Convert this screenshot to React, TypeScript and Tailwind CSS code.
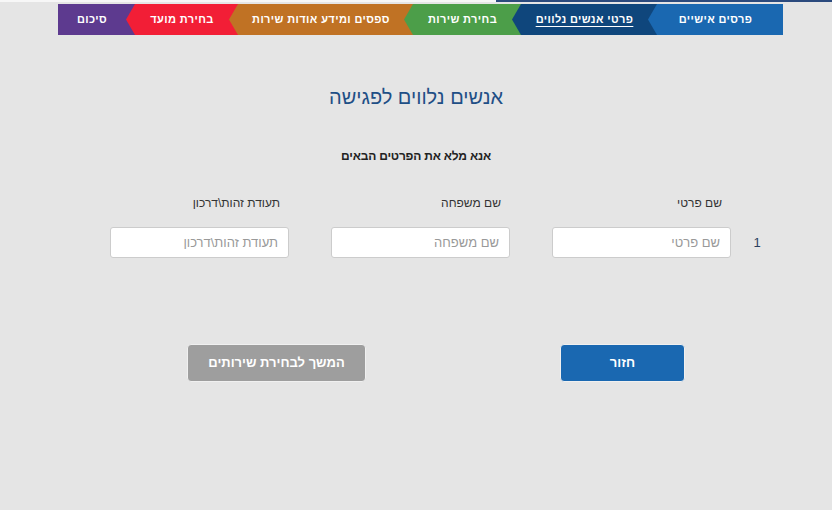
const steps = [
  { label: 'פרסים אישיים', bg: 'bg-[#1a68b1]', w: 'w-[135px]', z: 'z-[6]', first: true },
  { label: 'פרטי אנשים נלווים', bg: 'bg-[#0f467c]', w: 'w-[145px]', z: 'z-[5]', active: true },
  { label: 'בחירת שירות', bg: 'bg-[#4c9e49]', w: 'w-[117px]', z: 'z-[4]' },
  { label: 'ספסים ומידע אודות שירות', bg: 'bg-[#c07224]', w: 'w-[184px]', z: 'z-[3]' },
  { label: 'בחירת מועד', bg: 'bg-[#f21e36]', w: 'w-[112px]', z: 'z-[2]' },
  { label: 'סיכום', bg: 'bg-[#5d3a8f]', w: 'w-[77px]', z: 'z-[1]', last: true },
];

const fields = [
  { label: 'שם פרטי', placeholder: 'שם פרטי' },
  { label: 'שם משפחה', placeholder: 'שם משפחה' },
  { label: 'תעודת זהות\\דרכון', placeholder: 'תעודת זהות\\דרכון' },
];

export default function App() {
  return (
    <div
      dir="rtl"
      className="w-[832px] h-[510px] overflow-hidden bg-[#e5e5e5] font-['Liberation_Sans',Arial,sans-serif]"
    >
      <div className="flex h-[2px]">
        <div className="w-[336px] bg-[#2b4a7d]" />
        <div className="flex-1 bg-[#f7f7f7]" />
      </div>

      <nav className="mt-[2px] mr-[49px] flex h-[31px]">
        {steps.map((s) => (
          <div
            key={s.label}
            className={`relative ${s.z} ${s.w} ${s.bg} ${s.first ? '' : '-mr-[9px]'} ${
              s.last ? '' : '[clip-path:polygon(9px_0,100%_0,100%_100%,9px_100%,0_50%)] pl-[9px]'
            } pr-[9px] flex items-center justify-center`}
          >
            <span
              className={`text-[11px] font-bold text-white whitespace-nowrap tracking-[0.4px] ${
                s.active ? 'underline underline-offset-[3px]' : ''
              }`}
            >
              {s.label}
            </span>
          </div>
        ))}
      </nav>

      <h1 className="mt-[50px] text-center text-[20px] leading-[24px] text-[#1f4f86]">אנשים נלווים לפגישה</h1>

      <p className="mt-[39px] text-center text-[12px] font-bold leading-[16px] text-[#222] tracking-[-0.2px]">
        אנא מלא את הפרטים הבאים
      </p>

      <div className="mr-[49px] w-[725px] mt-[31px] flex">
        <div className="w-[52px]" />
        <div className="grid grid-cols-[179px_179px_179px] gap-x-[42px]">
          {fields.map((f) => (
            <div key={f.label} className="pr-[9px] text-[12px] leading-[16px] text-[#333]">
              {f.label}
            </div>
          ))}
        </div>
      </div>

      <div className="mr-[49px] w-[725px] mt-[16px] flex items-center">
        <div className="w-[52px] text-center text-[13px] text-[#2a3f5f]">1</div>
        <div className="grid grid-cols-[179px_179px_179px] gap-x-[42px]">
          {fields.map((f) => (
            <input
              key={f.label}
              placeholder={f.placeholder}
              className="h-[31px] rounded-[3px] border border-[#cccccc] bg-white px-[10px] text-[13px] text-[#333] placeholder:text-[#999] outline-none"
            />
          ))}
        </div>
      </div>

      <div className="mr-[49px] w-[725px] mt-[86px] flex">
        <div className="w-[98px]" />
        <button className="h-[38px] w-[125px] rounded-[4px] border border-[#f0f0f0] bg-[#1a68b1] text-[13px] font-bold text-white">
          חזור
        </button>
        <div className="w-[194px]" />
        <button className="h-[38px] w-[179px] rounded-[4px] border border-[#f0f0f0] bg-[#9e9e9e] text-[13px] font-bold text-white">
          המשך לבחירת שירותים
        </button>
      </div>
    </div>
  );
}
